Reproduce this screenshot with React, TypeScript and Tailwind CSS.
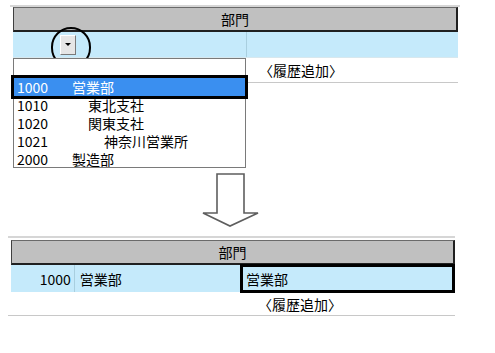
import React from 'react';

type Dept = { code: string; name: string; level: number };

const depts: Dept[] = [
    { code: '1000', name: '営業部', level: 0 },
    { code: '1010', name: '東北支社', level: 1 },
    { code: '1020', name: '関東支社', level: 1 },
    { code: '1021', name: '神奈川営業所', level: 2 },
    { code: '2000', name: '製造部', level: 0 },
];

const indent = ['pl-0', 'pl-[16px]', 'pl-[32px]'];

const GridHeader: React.FC = () => (
    <div className="h-[25px] bg-[#c0c0c0] border-t border-t-[#6a6a6a] border-l border-l-[#404040] border-r-2 border-r-[#202020] border-b-2 border-b-[#202020] flex items-center justify-center leading-none">
        部門
    </div>
);

export default function App() {
    return (
        <div className="relative w-[495px] h-[353px] bg-white overflow-hidden font-['Noto_Sans_CJK_JP',sans-serif] text-[14px] text-black">
            {/* before */}
            <div className="pt-[5px]">
                <div className="ml-[10px] w-[450px] h-[2px] bg-[#d6d6d6]" />
                <div className="ml-[13px] w-[445px]">
                    <GridHeader />
                    <div className="h-[26px] bg-[#c5eafb] flex border-b border-[#d8e8ee]">
                        <div className="w-[234px] border-r border-[#a9cfdf] flex items-center pl-[47px]">
                            <div className="w-[16px] h-[20px] bg-[#e6e6e6] border border-t-white border-l-white border-r-[#7a7a7a] border-b-[#7a7a7a] flex items-center justify-center">
                                <div className="w-0 h-0 border-l-[3px] border-r-[3px] border-t-[3px] border-l-transparent border-r-transparent border-t-black" />
                            </div>
                        </div>
                        <div className="flex-1" />
                    </div>
                    <div className="h-[25px] border-b border-[#c8c8c8] flex items-center pl-[246px] leading-none">
                        〈履歴追加〉
                    </div>
                </div>

                {/* arrow */}
                <svg className="ml-[202px] mt-[90px]" width="58" height="56" viewBox="0 0 58 56">
                    <polygon points="15,1 42,1 42,40 56,40 28,53 1,40 15,40" fill="white" stroke="#5e5e5e" strokeWidth="1.6" />
                </svg>

                {/* after */}
                <div className="ml-[8px] mt-[7px] w-[447px] h-[2px] bg-[#d6d6d6]" />
                <div className="ml-[11px] mt-[2px] w-[444px]">
                    <GridHeader />
                    <div className="h-[27px] flex">
                        <div className="w-[64px] bg-[#c5eafb] border-r border-[#a9cfdf] flex items-center justify-end pr-[3px] leading-none">1000</div>
                        <div className="w-[166px] bg-[#c5eafb] flex items-center pl-[5px] leading-none">営業部</div>
                        <div className="w-[216px] h-[29px] -mt-[1px] border-[3px] border-black bg-[#c5eafb] flex items-center pl-[3px] leading-none">営業部</div>
                    </div>
                </div>
                <div className="ml-[8px] w-[447px] h-[24px] border-b border-[#c8c8c8] flex items-center pl-[250px] leading-none">
                    〈履歴追加〉
                </div>
            </div>

            {/* circle marker */}
            <div className="absolute left-[51px] top-[27px] w-[40px] h-[41px] rounded-full border-[2.5px] border-black" />

            {/* open dropdown list */}
            <div className="absolute left-[13px] top-[58px] w-[233px] h-[110px] border border-[#7a7a7a] bg-white pt-[19px]">
                {depts.map((d, i) => (
                    <div
                        key={d.code}
                        className={`h-[18px] flex items-center pl-[3px] leading-none ${i === 0 ? 'relative z-10 bg-[#3a8ff0] text-white outline-[3px] outline-black' : ''}`}
                    >
                        <span className="w-[55px]">{d.code}</span>
                        <span className={indent[d.level]}>{d.name}</span>
                    </div>
                ))}
            </div>
        </div>
    );
}
